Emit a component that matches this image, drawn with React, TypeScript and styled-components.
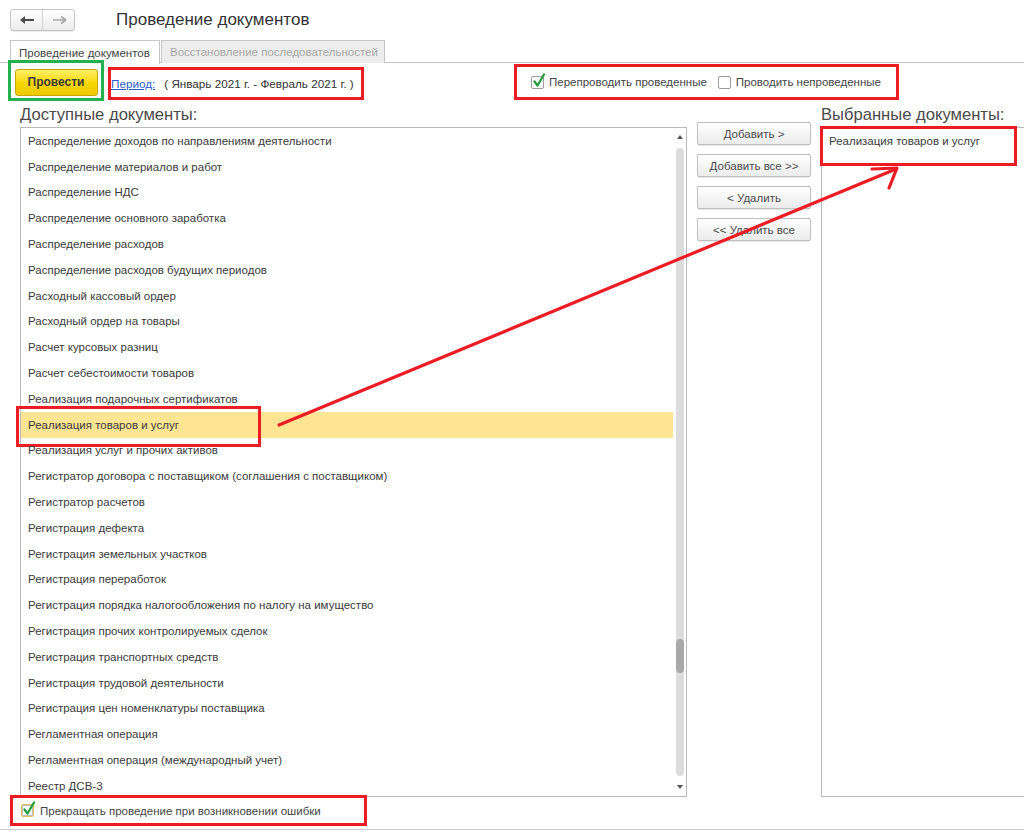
import React from 'react';
import styled, { createGlobalStyle } from 'styled-components';

const GlobalStyle = createGlobalStyle`
  html, body {
    margin: 0;
    padding: 0;
    background: #fff;
  }
  body {
    font-family: "Liberation Sans", Arial, sans-serif;
    color: #333;
  }
  * {
    box-sizing: border-box;
  }
`;

const AVAILABLE = [
  'Распределение доходов по направлениям деятельности',
  'Распределение материалов и работ',
  'Распределение НДС',
  'Распределение основного заработка',
  'Распределение расходов',
  'Распределение расходов будущих периодов',
  'Расходный кассовый ордер',
  'Расходный ордер на товары',
  'Расчет курсовых разниц',
  'Расчет себестоимости товаров',
  'Реализация подарочных сертификатов',
  'Реализация товаров и услуг',
  'Реализация услуг и прочих активов',
  'Регистратор договора с поставщиком (соглашения с поставщиком)',
  'Регистратор расчетов',
  'Регистрация дефекта',
  'Регистрация земельных участков',
  'Регистрация переработок',
  'Регистрация порядка налогообложения по налогу на имущество',
  'Регистрация прочих контролируемых сделок',
  'Регистрация транспортных средств',
  'Регистрация трудовой деятельности',
  'Регистрация цен номенклатуры поставщика',
  'Регламентная операция',
  'Регламентная операция (международный учет)',
  'Реестр ДСВ-3',
];

const SELECTED = 'Реализация товаров и услуг';

const ACTIONS = ['Добавить >', 'Добавить все >>', '< Удалить', '<< Удалить все'];

const Check = ({ checked, focus }: { checked?: boolean; focus?: boolean }) => (
  <CheckBox $focus={focus}>
    {checked && (
      <Tick viewBox="0 0 14 15" width="14" height="15">
        <path d="M2.5 8.5 L5.5 12.5 L12 1.5" fill="none" stroke="#1f9d3a" strokeWidth="2.2" strokeLinecap="round" strokeLinejoin="round" />
      </Tick>
    )}
  </CheckBox>
);

const App = () => {
  return (
    <Page>
      <GlobalStyle />
      <Header>
        <NavGroup>
          <NavButton>
            <svg width="16" height="10" viewBox="0 0 16 10">
              <path d="M1 5 L6 1 L6 9 Z" fill="#4a4a4a" />
              <rect x="5" y="4" width="10" height="2" fill="#4a4a4a" />
            </svg>
          </NavButton>
          <NavButton>
            <svg width="16" height="10" viewBox="0 0 16 10">
              <path d="M15 5 L10 1.5 M15 5 L10 8.5 M15 5 L2 5" fill="none" stroke="#a8a8a8" strokeWidth="1.6" />
            </svg>
          </NavButton>
        </NavGroup>
        <Title>Проведение документов</Title>
      </Header>

      <TabStrip>
        <Tab $active>Проведение документов</Tab>
        <Tab>Восстановление последовательностей</Tab>
      </TabStrip>

      <Toolbar>
        <GreenFrame>
          <PostButton>Провести</PostButton>
        </GreenFrame>
        <PeriodFrame>
          <PeriodLink>Период:</PeriodLink>
          <PeriodText>( Январь 2021 г. - Февраль 2021 г. )</PeriodText>
        </PeriodFrame>
        <OptionsFrame>
          <Check checked />
          <OptionLabel>Перепроводить проведенные</OptionLabel>
          <Check />
          <OptionLabel>Проводить непроведенные</OptionLabel>
        </OptionsFrame>
      </Toolbar>

      <Main>
        <Column>
          <ColumnTitle>Доступные документы:</ColumnTitle>
          <ListBox $width={667}>
            <ListBody>
              {AVAILABLE.map((name) => (
                <Row key={name} $active={name === SELECTED} $marked={name === SELECTED}>
                  {name}
                </Row>
              ))}
            </ListBody>
            <ScrollBar>
              <ArrowUp />
              <Track>
                <Thumb />
              </Track>
              <ArrowDown />
            </ScrollBar>
          </ListBox>
        </Column>

        <Actions>
          {ACTIONS.map((a) => (
            <ActionButton key={a}>{a}</ActionButton>
          ))}
        </Actions>

        <Column>
          <ColumnTitle>Выбранные документы:</ColumnTitle>
          <ListBox $width={210}>
            <ListBody>
              <SelectedRow>{SELECTED}</SelectedRow>
            </ListBody>
          </ListBox>
        </Column>
      </Main>

      <Footer>
        <StopFrame>
          <Check checked focus />
          <StopLabel>Прекращать проведение при возникновении ошибки</StopLabel>
        </StopFrame>
      </Footer>

      <Overlay viewBox="0 0 1024 832" width="1024" height="832">
        <g fill="none" stroke="#ec1c24" strokeWidth="3.2" strokeLinecap="round" strokeLinejoin="round">
          <path d="M279 425 L896 169" />
          <path d="M872 169 L897 168 L889 188" />
        </g>
      </Overlay>
    </Page>
  );
};

export default App;

const Page = styled.div`
  position: relative;
  width: 1024px;
  height: 832px;
  overflow: hidden;
  display: flex;
  flex-direction: column;
`;

const Header = styled.div`
  height: 40px;
  display: flex;
  align-items: center;
  padding-left: 10px;
`;

const NavGroup = styled.div`
  display: flex;
  width: 65px;
  height: 22px;
  border: 1px solid #c4c4c4;
  border-radius: 3px;
  background: linear-gradient(#ffffff, #ececec);
  box-shadow: 0 1px 1px rgba(0, 0, 0, 0.08);
`;

const NavButton = styled.div`
  flex: 1;
  display: flex;
  align-items: center;
  justify-content: center;

  & + & {
    border-left: 1px solid #d4d4d4;
  }
`;

const Title = styled.div`
  margin-left: 41px;
  font-size: 17px;
  color: #333;
`;

const TabStrip = styled.div`
  display: flex;
  height: 23px;
  padding-left: 10px;
  border-bottom: 1px solid #c6c6c6;
`;

const Tab = styled.div<{ $active?: boolean }>`
  padding: 0 8px;
  display: flex;
  align-items: center;
  font-size: 11.5px;
  white-space: nowrap;
  border: 1px solid #c6c6c6;
  border-bottom: none;
  margin-right: 1px;
  color: ${(p) => (p.$active ? '#444' : '#a8a8a8')};
  background: ${(p) => (p.$active ? '#fff' : '#ededed')};
  margin-bottom: ${(p) => (p.$active ? '-1px' : '0')};
  height: ${(p) => (p.$active ? '24px' : '23px')};
  width: ${(p) => (p.$active ? '150px' : '224px')};
`;

const Toolbar = styled.div`
  display: flex;
  align-items: flex-start;
  height: 39px;
  padding-left: 8px;
`;

const GreenFrame = styled.div`
  margin-top: -3px;
  width: 96px;
  height: 41px;
  border: 3px solid #22b14c;
  display: flex;
  align-items: center;
  justify-content: center;
  padding-top: 3px;
  background: #fff;
  position: relative;
`;

const PostButton = styled.div`
  width: 83px;
  height: 27px;
  border: 1px solid #c9a700;
  border-radius: 3px;
  background: linear-gradient(#fff06a, #f6d600 55%, #eec900);
  display: flex;
  align-items: center;
  justify-content: center;
  font-size: 12px;
  font-weight: bold;
  color: #3a3a3a;
`;

const PeriodFrame = styled.div`
  margin-left: 4px;
  margin-top: 4px;
  width: 256px;
  height: 33px;
  border: 3px solid #ec1c24;
  display: flex;
  align-items: center;
  font-size: 11.7px;
  white-space: nowrap;
`;

const PeriodLink = styled.span`
  color: #2a5cc8;
  text-decoration: underline;
`;

const PeriodText = styled.span`
  margin-left: 9px;
  color: #333;
`;

const OptionsFrame = styled.div`
  margin-left: 150px;
  margin-top: 1px;
  width: 385px;
  height: 36px;
  border: 3px solid #ec1c24;
  display: flex;
  align-items: center;
  padding-left: 14px;
`;

const OptionLabel = styled.span`
  font-size: 11.5px;
  white-space: nowrap;
  color: #444;
  margin-left: 5px;
  margin-right: 11px;
`;

const CheckBox = styled.div<{ $focus?: boolean }>`
  position: relative;
  flex: none;
  width: 13px;
  height: 13px;
  border: 1px solid ${(p) => (p.$focus ? '#e2c25c' : '#9c9c9c')};
  border-radius: 2px;
  background: #fff;
  box-shadow: ${(p) => (p.$focus ? 'inset 0 0 0 1px #bdbdbd' : 'none')};
`;

const Tick = styled.svg`
  position: absolute;
  left: 0;
  top: -4px;
`;

const Main = styled.div`
  display: flex;
  height: 695px;
  padding-left: 20px;
`;

const Column = styled.div`
  display: flex;
  flex-direction: column;
  flex: none;
`;

const ColumnTitle = styled.div`
  height: 25px;
  display: flex;
  align-items: center;
  font-size: 16.6px;
  color: #4a4a4a;
  padding-top: 1px;
  white-space: nowrap;
`;

const ListBox = styled.div<{ $width: number }>`
  width: ${(p) => p.$width}px;
  height: 670px;
  border: 1px solid #b9b9b9;
  display: flex;
  background: #fff;
`;

const ListBody = styled.div`
  flex: 1;
  display: flex;
  flex-direction: column;
`;

const Row = styled.div<{ $active?: boolean; $marked?: boolean }>`
  position: relative;
  height: 25.8px;
  flex: none;
  display: flex;
  align-items: center;
  padding-left: 7px;
  font-size: 11.5px;
  color: #3a3a3a;
  white-space: nowrap;
  background: ${(p) => (p.$active ? '#fde594' : 'transparent')};

  &::after {
    content: '';
    display: ${(p) => (p.$marked ? 'block' : 'none')};
    position: absolute;
    left: -5px;
    top: -6px;
    width: 239px;
    height: 35px;
    border: 3px solid #ec1c24;
  }
`;

const SelectedRow = styled(Row)`
  &::after {
    display: block;
    left: -2px;
    top: -2px;
    width: 191px;
    height: 34px;
  }
`;

const ScrollBar = styled.div`
  width: 13px;
  display: flex;
  flex-direction: column;
  align-items: center;
`;

const ArrowUp = styled.div`
  margin-top: 7px;
  width: 0;
  height: 0;
  border-left: 3px solid transparent;
  border-right: 3px solid transparent;
  border-bottom: 4px solid #555;
`;

const ArrowDown = styled.div`
  margin-bottom: 7px;
  width: 0;
  height: 0;
  border-left: 3px solid transparent;
  border-right: 3px solid transparent;
  border-top: 4px solid #555;
`;

const Track = styled.div`
  flex: 1;
  width: 8px;
  margin: 9px 0 9px;
  border-radius: 4px;
  background: #dcdcdc;
`;

const Thumb = styled.div`
  margin-top: 491px;
  height: 34px;
  border-radius: 4px;
  background: #a9a9a9;
`;

const Actions = styled.div`
  width: 114px;
  margin: 0 10px;
  padding-top: 20px;
  display: flex;
  flex-direction: column;
  gap: 9px;
  flex: none;
`;

const ActionButton = styled.div`
  height: 23px;
  border: 1px solid #c0c0c0;
  border-radius: 2px;
  background: linear-gradient(#ffffff, #ececec);
  box-shadow: 0 1px 1px rgba(0, 0, 0, 0.1);
  display: flex;
  align-items: center;
  justify-content: center;
  font-size: 11.5px;
  color: #4a4a4a;
`;

const Footer = styled.div`
  height: 33px;
  padding-left: 10px;
  border-bottom: 1px solid #cacaca;
`;

const StopFrame = styled.div`
  margin-top: -2px;
  width: 357px;
  height: 31px;
  border: 3px solid #ec1c24;
  display: flex;
  align-items: center;
  padding-left: 8px;
  background: #fff;
  position: relative;
`;

const StopLabel = styled.span`
  margin-left: 6px;
  font-size: 11.5px;
  color: #444;
  white-space: nowrap;
`;

const Overlay = styled.svg`
  position: absolute;
  left: 0;
  top: 0;
  pointer-events: none;
`;
